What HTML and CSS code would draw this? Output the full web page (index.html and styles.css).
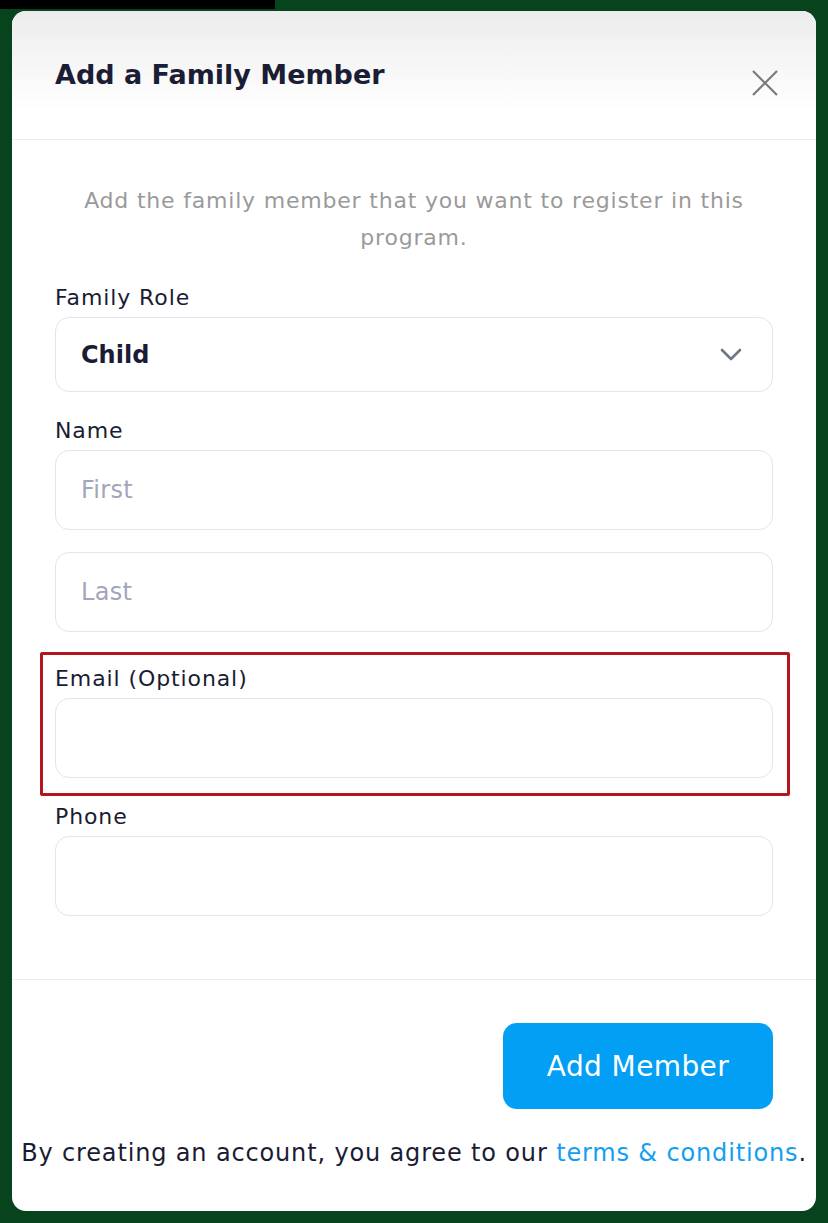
FILE: index.html
```html
<!DOCTYPE html>
<html>
<head>
  <title>Add a Family Member</title>
  <link rel="stylesheet" href="styles.css">
</head>
<body>
  <div class="top-strip"></div>
  <div class="modal">
    <div class="modal-header">
      <h2>Add a Family Member</h2>
      <button class="close-button" aria-label="Close">
        <svg width="26" height="26" viewBox="0 0 26 26">
          <path d="M1 1 L25 25 M25 1 L1 25" stroke="#7a7a7a" stroke-width="2.2" fill="none"/>
        </svg>
      </button>
    </div>

    <div class="modal-body">
      <p class="intro">Add the family member that you want to register in this program.</p>

      <div class="field">
        <label for="role">Family Role</label>
        <div class="select-box" id="role">
          <span>Child</span>
          <svg width="22" height="14" viewBox="0 0 22 14">
            <path d="M2 2 L11 11 L20 2" stroke="#70748a" stroke-width="2.6" fill="none" stroke-linecap="round" stroke-linejoin="round"/>
          </svg>
        </div>
      </div>

      <div class="field">
        <label for="first">Name</label>
        <input class="text-input" id="first" type="text" placeholder="First">
        <input class="text-input second" id="last" type="text" placeholder="Last">
      </div>

      <div class="field highlight">
        <label for="email">Email (Optional)</label>
        <input class="text-input" id="email" type="email">
      </div>

      <div class="field phone">
        <label for="phone">Phone</label>
        <input class="text-input" id="phone" type="tel">
      </div>
    </div>

    <div class="modal-footer">
      <div class="actions">
        <button class="add-button">Add Member</button>
      </div>
      <p class="terms">By creating an account, you agree to our <a href="#">terms &amp; conditions</a>.</p>
    </div>
  </div>
</body>
</html>
```

FILE: styles.css
```css
body {
  margin: 0;
  background-color: #07431c;
  font-family: 'DejaVu Sans', 'Open Sans', sans-serif;
  color: #1a1c33;
}

.top-strip {
  width: 275px;
  height: 9px;
  background-color: #000;
}

.modal {
  margin: 2px 12px 0 12px;
  background-color: #fff;
  border-radius: 14px;
  overflow: hidden;
}

.modal-header {
  display: flex;
  justify-content: space-between;
  align-items: flex-start;
  height: 128px;
  padding: 0 38px 0 43px;
  background: linear-gradient(#ececec, #ffffff 78%);
  border-bottom: 1px solid #e9eef2;
}

.modal-header h2 {
  margin: 44px 0 0 0;
  font-size: 27px;
  line-height: 40px;
  font-weight: 700;
  color: #1b1d35;
}

.close-button {
  margin-top: 59px;
  padding: 0;
  border: none;
  background: none;
  cursor: pointer;
  line-height: 0;
}

.modal-body {
  padding: 42px 43px 63px 43px;
  border-bottom: 1px solid #e9eef2;
}

.intro {
  margin: 0 0 27px 0;
  text-align: center;
  font-size: 22px;
  line-height: 37px;
  letter-spacing: 0.8px;
  color: #9a9a9a;
}

.field label {
  display: block;
  font-size: 22px;
  line-height: 30px;
  letter-spacing: 0.9px;
  margin-bottom: 4px;
  color: #1a1c33;
}

.field + .field {
  margin-top: 24px;
}

.select-box {
  display: flex;
  align-items: center;
  justify-content: space-between;
  height: 73px;
  padding: 0 30px 0 25px;
  border: 1px solid #e2e4ef;
  border-radius: 14px;
  font-size: 24px;
  font-weight: 600;
}

.text-input {
  display: block;
  box-sizing: border-box;
  width: 100%;
  height: 80px;
  padding: 0 25px;
  border: 1px solid #e2e4ef;
  border-radius: 14px;
  font-family: inherit;
  font-size: 24px;
  letter-spacing: 0.3px;
  color: #1a1c33;
  outline: none;
}

.text-input::placeholder {
  color: #a3a6bb;
}

.text-input.second {
  margin-top: 22px;
}

.field.highlight {
  margin: 20px -17px 0 -15px;
  padding: 9px 14px 15px 12px;
  border: 3px solid #b5151d;
  border-radius: 2px;
}

.field.highlight + .field.phone {
  margin-top: 6px;
}

.modal-footer {
  padding: 43px 8px 42px 8px;
}

.actions {
  display: flex;
  justify-content: flex-end;
  padding-right: 35px;
}

.add-button {
  width: 270px;
  height: 86px;
  border: none;
  border-radius: 14px;
  background-color: #039ff4;
  color: #fff;
  font-family: inherit;
  font-size: 28px;
  letter-spacing: 0.4px;
  cursor: pointer;
}

.terms {
  margin: 28px 0 0 0;
  text-align: center;
  font-size: 24px;
  line-height: 32px;
  letter-spacing: 0.85px;
  color: #1a1c33;
}

.terms a {
  color: #139ef0;
  text-decoration: none;
}
```
